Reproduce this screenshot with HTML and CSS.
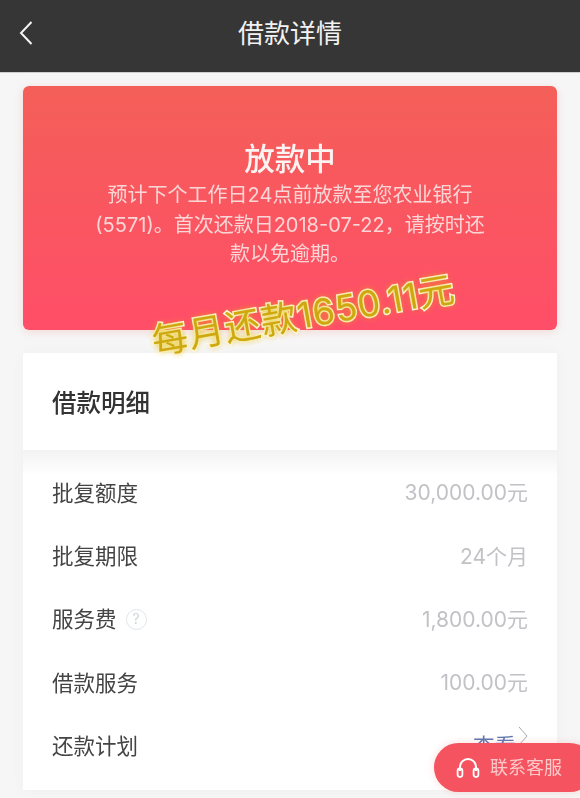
FILE: index.html
```html
<!DOCTYPE html>
<html lang="zh-CN">
<head>
<meta charset="utf-8">
<title>借款详情</title>
<link rel="stylesheet" href="styles.css">
</head>
<body>
<div class="page">
  <header class="topbar">
    <svg class="back" viewBox="0 0 14 24" width="14" height="24"><path d="M12.5 1 L2 12 L12.5 23" fill="none" stroke="#f4f4f4" stroke-width="2"/></svg>
    <h1 class="topbar-title">借款详情</h1>
  </header>
  <main class="content">
    <section class="status">
      <h2 class="status-title">放款中</h2>
      <p class="status-text">预计下个工作日24点前放款至您农业银行<br>(5571)。首次还款日2018-07-22，请按时还<br>款以免逾期。</p>
    </section>
    <section class="detail">
      <h3 class="detail-head">借款明细</h3>
      <div class="rows">
        <div class="row"><span class="label">批复额度</span><span class="value">30,000.00元</span></div>
        <div class="row"><span class="label">批复期限</span><span class="value">24个月</span></div>
        <div class="row"><span class="label">服务费<span class="help">?</span></span><span class="value">1,800.00元</span></div>
        <div class="row"><span class="label">借款服务</span><span class="value">100.00元</span></div>
        <div class="row"><span class="label">还款计划</span><span class="link">查看<svg class="chev" viewBox="0 0 10 20" width="10" height="20"><path d="M1 1 L9 10 L1 19" fill="none" stroke="#a9a9ad" stroke-width="1"/></svg></span></div>
      </div>
    </section>
  </main>
  <div class="stamp">每月还款1650.11元</div>
  <div class="service">
    <svg class="phones" viewBox="0 0 24 22" width="24" height="22"><path d="M4 14 V10 a8 8 0 0 1 16 0 V14" fill="none" stroke="#fff" stroke-width="2"/><rect x="1.6" y="11.5" width="4.8" height="8.5" rx="2.4" fill="none" stroke="#fff" stroke-width="1.8"/><rect x="17.6" y="11.5" width="4.8" height="8.5" rx="2.4" fill="none" stroke="#fff" stroke-width="1.8"/></svg>
    <span class="service-text">联系客服</span>
  </div>
</div>
</body>
</html>
```
FILE: styles.css
```css
* { box-sizing: border-box; margin: 0; padding: 0; }
html, body { width: 580px; height: 798px; overflow: hidden; }
body { font-family: Inter, "Noto Sans CJK SC", sans-serif; font-weight: 300; background: #f6f6f6; }
.page { position: relative; width: 580px; height: 798px; overflow: hidden; filter: blur(0.4px); }
.topbar { height: 73px; background: #363636; border-bottom: 1px solid #cfcfcf; display: flex; align-items: center; justify-content: center; position: relative; }
.back { position: absolute; left: 19px; top: 21px; }
.topbar-title { font-size: 26px; font-weight: 400; color: #f2f2f2; line-height: 1; margin-top: -5px; }
.content { padding: 13px 23px 0; display: flex; flex-direction: column; gap: 23px; }
.status { height: 244px; border-radius: 6px; background: linear-gradient(180deg, #f45f58 0%, #ff4e68 100%); box-shadow: 0 2px 10px rgba(240, 90, 90, .18); text-align: center; color: #fff; padding-top: 51px; }
.status-title { font-size: 30.5px; font-weight: 500; line-height: 44px; color: #fbf3f1; }
.status-text { font-size: 20px; font-weight: 400; line-height: 29.5px; color: #fad6d6; }
.detail { height: 437px; background: #fff; box-shadow: 0 0 14px rgba(0, 0, 0, .03); }
.detail-head { height: 97px; padding: 32px 29px 0; font-size: 24.5px; font-weight: 500; line-height: 36px; color: #333; }
.rows { padding: 9.5px 29px 0; background: linear-gradient(180deg, #f2f2f2 0, #fff 26px); }
.row { height: 63.4px; display: flex; align-items: center; justify-content: space-between; font-size: 21.5px; }
.label { color: #444; display: flex; align-items: center; font-weight: 400; }
.value { color: #c2c2c6; font-size: 21px; font-weight: 400; }
.help { width: 21px; height: 21px; margin: 3px 0 0 9px; border: 1.5px solid #dfe5e8; border-radius: 50%; color: #cdd6da; font-size: 14px; line-height: 18px; text-align: center; }
.link { color: #5b78b0; display: flex; align-items: flex-start; font-weight: 400; }
.chev { margin-left: 2px; margin-top: -3px; }
.stamp { position: absolute; left: 150px; top: 293px; font-size: 36px; font-weight: 400; letter-spacing: .8px; line-height: 44px; white-space: nowrap; color: #cda80f; -webkit-text-stroke: 3px #fffdf0; paint-order: stroke fill; text-shadow: 0 0 6px #e2b900; transform: rotate(-10deg); }
.service { position: absolute; left: 434px; top: 743px; width: 160px; height: 49px; border-radius: 25px; background: #f4535f; box-shadow: 0 0 8px rgba(240, 90, 90, .2); display: flex; align-items: center; padding-left: 22px; gap: 10px; }
.service-text { font-size: 18px; font-weight: 400; color: #fbc9c9; line-height: 1; }
```
